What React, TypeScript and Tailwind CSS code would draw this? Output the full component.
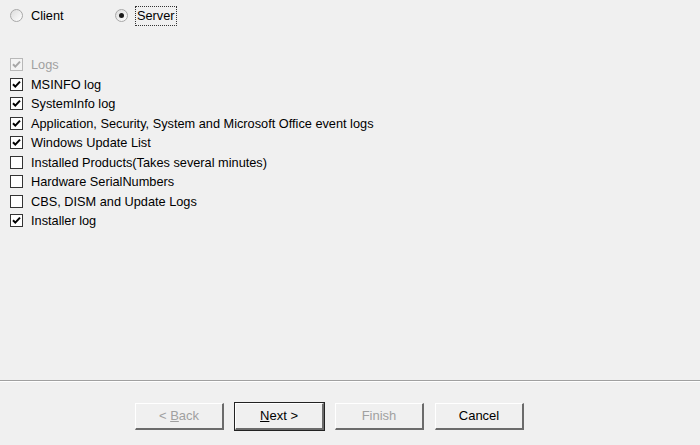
import React from 'react';

const font = { fontFamily: '"Liberation Sans", Arial, sans-serif' };

const items = [
  { label: 'Logs', checked: true, disabled: true },
  { label: 'MSINFO log', checked: true },
  { label: 'SystemInfo log', checked: true },
  { label: 'Application, Security, System and Microsoft Office event logs', checked: true },
  { label: 'Windows Update List', checked: true },
  { label: 'Installed Products(Takes several minutes)', checked: false },
  { label: 'Hardware SerialNumbers', checked: false },
  { label: 'CBS, DISM and Update Logs', checked: false },
  { label: 'Installer log', checked: true },
];

function Radio({ selected }: { selected?: boolean }) {
  return (
    <span className="w-[13px] h-[13px] rounded-full border border-[#a8a8a8] bg-gradient-to-br from-[#dcdcdc] to-white flex items-center justify-center shrink-0">
      {selected && <span className="w-[5px] h-[5px] rounded-full bg-[#1a1a1a]" />}
    </span>
  );
}

function Check({ checked, disabled }: { checked: boolean; disabled?: boolean }) {
  return (
    <span
      className={
        'w-[13px] h-[13px] border flex items-center justify-center shrink-0 ' +
        (disabled ? 'border-[#b8b8b8] bg-[#f4f4f4]' : 'border-[#333333] bg-white')
      }
    >
      {checked && (
        <svg width="11" height="11" viewBox="0 0 11 11">
          <path
            d="M2 5.2 L4.3 7.6 L9 2.6"
            fill="none"
            stroke={disabled ? '#a8a8a8' : '#000'}
            strokeWidth="2"
          />
        </svg>
      )}
    </span>
  );
}

function WizButton({ label, underline, rest, disabled, isDefault }: {
  label?: string; underline?: string; rest?: string; disabled?: boolean; isDefault?: boolean;
}) {
  return (
    <button
      className={
        'w-[89px] h-[27px] text-[13px] bg-[#f0f0f0] border-t border-l border-t-white border-l-white border-r-2 border-b-2 border-r-[#6b6b6b] border-b-[#6b6b6b] ' +
        (isDefault ? 'outline outline-1 outline-[#222] ' : '') +
        (disabled ? 'text-[#a0a0a0]' : 'text-black')
      }
      style={font}
    >
      {underline ? (
        <span>
          {label}
          <span className="underline">{underline}</span>
          {rest}
        </span>
      ) : (
        label
      )}
    </button>
  );
}

export default function App() {
  return (
    <div className="w-[700px] h-[445px] bg-[#f0f0f0] flex flex-col overflow-hidden text-[12.75px] text-black" style={font}>
      <div className="flex-1">
        {/* client / server choice */}
        <div className="h-[31px] flex items-center pl-[10px]">
          <Radio />
          <span className="ml-[8px] w-[84px]">Client</span>
          <Radio selected />
          <span className="ml-[7px] px-[1px] border border-dotted border-[#333] leading-[18px]">Server</span>
        </div>

        <div className="pt-[24px] pl-[10px] flex flex-col">
          {items.map((it) => (
            <div key={it.label} className="h-[19.5px] flex items-center">
              <Check checked={it.checked} disabled={it.disabled} />
              <span className={'ml-[8px] ' + (it.disabled ? 'text-[#a0a0a0]' : '')}>{it.label}</span>
            </div>
          ))}
        </div>
      </div>

      <div className="h-[1px] bg-[#a0a0a0]" />
      <div className="h-[1px] bg-white" />
      <div className="h-[63px] pl-[135px] pt-[21px] flex items-start gap-[11px]">
        <WizButton label="< " underline="B" rest="ack" disabled />
        <WizButton underline="N" rest="ext >" isDefault />
        <WizButton label="Finish" disabled />
        <WizButton label="Cancel" />
      </div>
    </div>
  );
}
